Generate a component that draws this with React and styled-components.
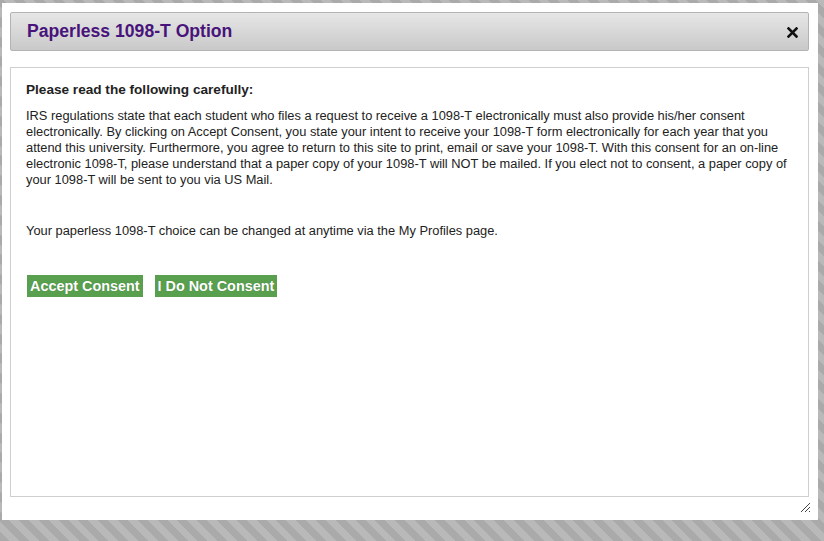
import React from 'react';
import styled, { createGlobalStyle } from 'styled-components';

const GlobalStyle = createGlobalStyle`
  html, body {
    margin: 0;
    padding: 0;
  }
  body {
    font-family: "Liberation Sans", Arial, sans-serif;
    background: repeating-linear-gradient(
      45deg,
      #aaaaaa 0 7px,
      #b9b9b9 7px 14px
    );
    width: 824px;
    height: 541px;
    overflow: hidden;
  }
`;

const Page = styled.div`
  padding: 3px 6px 21px 2px;
  height: 541px;
  box-sizing: border-box;
`;

const Dialog = styled.div`
  position: relative;
  height: 100%;
  background: #fff;
  box-sizing: border-box;
  padding: 9px 9px 23px 8px;
  display: flex;
  flex-direction: column;
  gap: 16px;
`;

const TitleBar = styled.div`
  height: 39px;
  box-sizing: border-box;
  display: flex;
  align-items: center;
  justify-content: space-between;
  padding: 0 10px 0 16px;
  border: 1px solid #b3b3b3;
  border-radius: 2px;
  background: linear-gradient(to bottom, #e6e6e6, #c9c9c9);
`;

const Title = styled.h1`
  margin: 0;
  font-size: 17.6px;
  font-weight: bold;
  color: #48137a;
`;

const CloseButton = styled.button`
  border: none;
  background: transparent;
  padding: 0;
  width: 12px;
  height: 12px;
  display: flex;
  align-items: center;
  justify-content: center;
  cursor: pointer;
  margin-top: 1px;
`;

const ContentBox = styled.div`
  flex: 1;
  border: 1px solid #cfcfcf;
  padding: 14px 18px 14px 15px;
  color: #222;
  font-size: 12.85px;
  line-height: 16px;
`;

const Heading = styled.p`
  margin: 0 0 10px;
  font-weight: bold;
  font-size: 13.6px;
`;

const Paragraph = styled.p`
  margin: 0 0 ${(props) => props.$space || 0}px;
`;

const Actions = styled.div`
  display: flex;
  gap: 12px;
  padding-left: 1px;
`;

const GreenButton = styled.button`
  height: 22px;
  padding: 0 3px;
  border: none;
  background: #58a04e;
  color: #fff;
  font-family: "Liberation Sans", Arial, sans-serif;
  font-size: 14.4px;
  font-weight: bold;
  text-shadow: 0 0 1px rgba(0, 0, 0, 0.25);
  cursor: pointer;
`;

const ResizeHandle = styled.svg`
  position: absolute;
  right: 7px;
  bottom: 7px;
`;

const CloseIcon = () => (
  <svg width="11" height="11" viewBox="0 0 11 11">
    <path
      d="M1.5 1.5 L9.5 9.5 M9.5 1.5 L1.5 9.5"
      stroke="#111"
      strokeWidth="2.6"
      strokeLinecap="square"
    />
  </svg>
);

const App = () => {
  return (
    <>
      <GlobalStyle />
      <Page>
        <Dialog>
          <TitleBar>
            <Title>Paperless 1098-T Option</Title>
            <CloseButton aria-label="Close">
              <CloseIcon />
            </CloseButton>
          </TitleBar>
          <ContentBox>
            <Heading>Please read the following carefully:</Heading>
            <Paragraph $space={35}>
              IRS regulations state that each student who files a request to
              receive a 1098-T electronically must also provide his/her consent
              electronically. By clicking on Accept Consent, you state your
              intent to receive your 1098-T form electronically for each year
              that you attend this university. Furthermore, you agree to return
              to this site to print, email or save your 1098-T. With this
              consent for an on-line electronic 1098-T, please understand that a
              paper copy of your 1098-T will NOT be mailed. If you elect not to
              consent, a paper copy of your 1098-T will be sent to you via US
              Mail.
            </Paragraph>
            <Paragraph $space={36}>
              Your paperless 1098-T choice can be changed at anytime via the My
              Profiles page.
            </Paragraph>
            <Actions>
              <GreenButton>Accept Consent</GreenButton>
              <GreenButton>I Do Not Consent</GreenButton>
            </Actions>
          </ContentBox>
          <ResizeHandle width="12" height="12" viewBox="0 0 12 12">
            <path
              d="M11 2 L2 11 M11 6 L6 11 M11 10 L10 11"
              stroke="#444"
              strokeWidth="1"
            />
          </ResizeHandle>
        </Dialog>
      </Page>
    </>
  );
};

export default App;
